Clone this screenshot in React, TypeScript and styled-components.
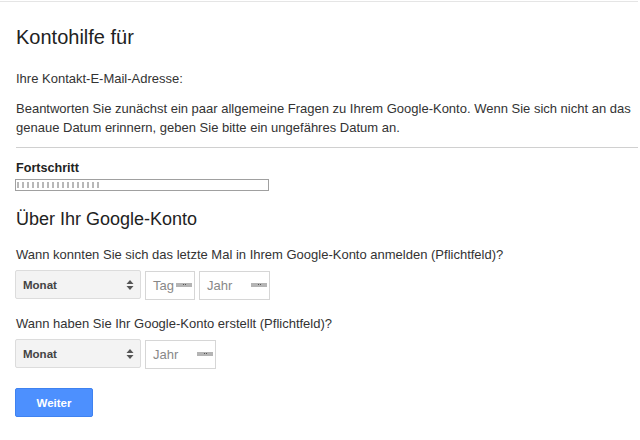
import React from "react";
import styled, { createGlobalStyle } from "styled-components";

const Global = createGlobalStyle`
  html, body { margin: 0; padding: 0; background: #fff; }
  body { font-family: "Liberation Sans", Arial, sans-serif; color: #222; }
`;

const Page = styled.div`
  width: 638px;
  border-top: 1px solid #e5e5e5;
  margin-top: 1px;
  padding: 0 0 0 16px;
  box-sizing: border-box;
`;

const Title = styled.h1`
  font-size: 20px;
  font-weight: normal;
  margin: 0;
  padding-top: 23px;
  line-height: 24px;
  color: #222;
`;

const Text = styled.p<{ $mt?: number }>`
  font-size: 13px;
  line-height: 19px;
  margin: ${(p) => p.$mt ?? 0}px 0 0 0;
  color: #333;
`;

const Rule = styled.hr`
  border: 0;
  border-top: 1px solid #d0d0d0;
  margin: 10px 0 0 0;
`;

const Label = styled.div`
  font-size: 12.6px;
  font-weight: bold;
  margin-top: 13px;
  line-height: 15px;
  color: #222;
`;

const Bar = styled.div`
  margin-top: 3px;
  margin-left: -1px;
  width: 254px;
  height: 12px;
  border: 1px solid #a0a0a0;
  box-sizing: border-box;
  padding: 2px 1px;
  display: flex;
`;

const Fill = styled.div`
  height: 100%;
  background: repeating-linear-gradient(
    90deg,
    #b8b8b8 0px,
    #b8b8b8 2px,
    #fff 2px,
    #fff 5px
  );
`;

const Heading = styled.h2`
  font-size: 18px;
  font-weight: normal;
  margin: 17px 0 0 0;
  line-height: 22px;
  color: #222;
`;

const Question = styled.div<{ $mt: number }>`
  font-size: 13px;
  line-height: 16px;
  margin-top: ${(p) => p.$mt}px;
  color: #333;
`;

const Row = styled.div<{ $mt: number }>`
  display: flex;
  gap: 4px;
  margin-top: ${(p) => p.$mt}px;
  margin-left: -1px;
`;

const Select = styled.div`
  width: 126px;
  height: 29px;
  box-sizing: border-box;
  background: #f3f3f3;
  border: 1px solid #dcdcdc;
  border-radius: 2px;
  display: flex;
  align-items: center;
  justify-content: space-between;
  padding: 0 6px 0 7px;
  font-size: 11.5px;
  font-weight: bold;
  color: #444;
`;

const Arrows = styled.svg`
  width: 8px;
  height: 12px;
`;

const Input = styled.div<{ $w: number }>`
  width: ${(p) => p.$w}px;
  height: 29px;
  box-sizing: border-box;
  border: 1px solid #d6d6d6;
  display: flex;
  align-items: center;
  justify-content: space-between;
  padding: 0 2px 0 7px;
  font-size: 13px;
  color: #888;
  margin-top: 1px;
`;

const Spin = styled.span`
  width: 16px;
  height: 4px;
  background: #b4b4b4;
  display: flex;
  align-items: center;
  justify-content: center;
  gap: 1px;
  margin-top: -2px;
  &::before, &::after {
    content: "";
    width: 1px;
    height: 1px;
    background: #555;
  }
`;

const Button = styled.button`
  margin-top: 19px;
  margin-left: -1px;
  width: 78px;
  height: 29px;
  background: #4d90fe;
  border: 1px solid #3f82f0;
  border-radius: 2px;
  color: #fff;
  font-family: "Liberation Sans", Arial, sans-serif;
  font-size: 11.5px;
  font-weight: bold;
  padding: 0;
`;

const SelectBox = () => (
  <Select>
    <span>Monat</span>
    <Arrows viewBox="0 0 8 12">
      <path d="M4 1 L7.5 5 L0.5 5 Z" fill="#555" />
      <path d="M4 11 L7.5 7 L0.5 7 Z" fill="#555" />
    </Arrows>
  </Select>
);

export default function App() {
  return (
    <>
      <Global />
      <Page>
        <Title>Kontohilfe für</Title>
        <Text $mt={20}>Ihre Kontakt-E-Mail-Adresse:</Text>
        <Text $mt={11}>
          Beantworten Sie zunächst ein paar allgemeine Fragen zu Ihrem Google-Konto. Wenn Sie sich nicht an das genaue
          Datum erinnern, geben Sie bitte ein ungefähres Datum an.
        </Text>
        <Rule />
        <Label>Fortschritt</Label>
        <Bar>
          <Fill style={{ width: "84px" }} />
        </Bar>
        <Heading>Über Ihr Google-Konto</Heading>
        <Question $mt={17}>Wann konnten Sie sich das letzte Mal in Ihrem Google-Konto anmelden (Pflichtfeld)?</Question>
        <Row $mt={7}>
          <SelectBox />
          <Input $w={50}>
            Tag<Spin />
          </Input>
          <Input $w={71}>
            Jahr<Spin />
          </Input>
        </Row>
        <Question $mt={16}>Wann haben Sie Ihr Google-Konto erstellt (Pflichtfeld)?</Question>
        <Row $mt={7}>
          <SelectBox />
          <Input $w={71}>
            Jahr<Spin />
          </Input>
        </Row>
        <Button>Weiter</Button>
      </Page>
    </>
  );
}
